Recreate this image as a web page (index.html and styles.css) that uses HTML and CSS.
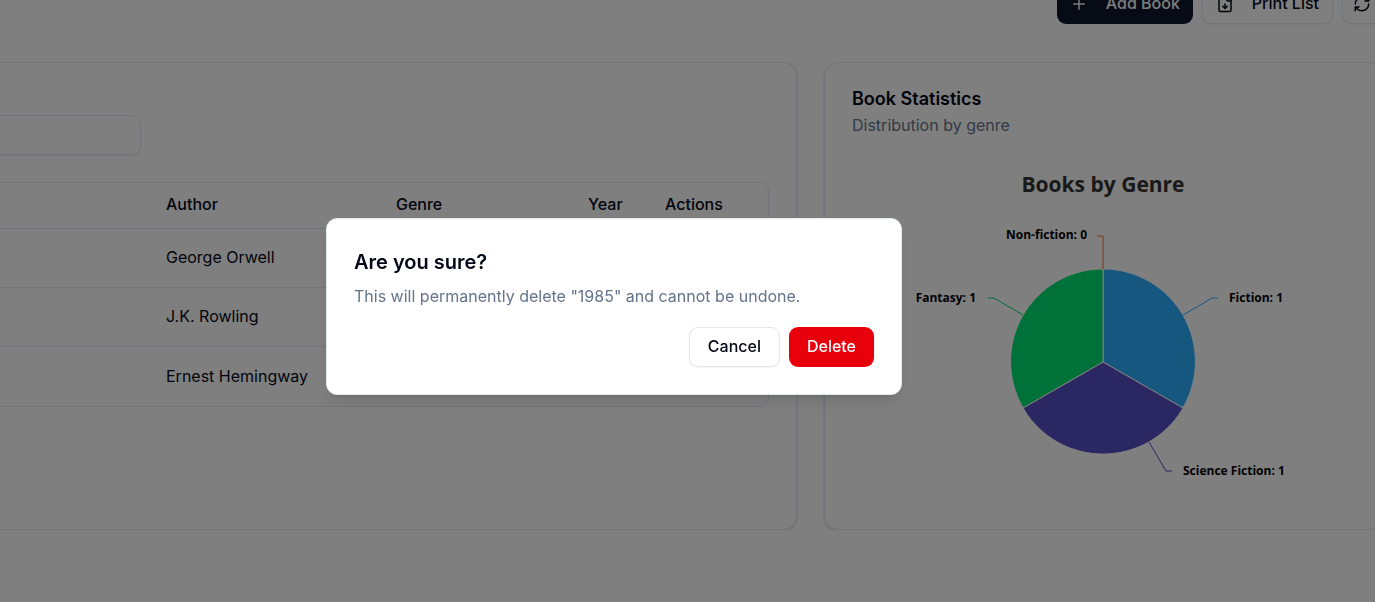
FILE: index.html
```html
<!DOCTYPE html>
<html lang="en">
<head>
<meta charset="utf-8">
<title>Books</title>
<link rel="stylesheet" href="styles.css">
</head>
<body>
<div class="page">
  <header class="toolbar">
    <button class="btn btn-primary" type="button">
      <svg class="icon" viewBox="0 0 24 24"><path d="M5 12h14M12 5v14"/></svg>
      Add Book
    </button>
    <button class="btn btn-outline" type="button">
      <svg class="icon" viewBox="0 0 24 24"><path d="M15 2H6a2 2 0 0 0-2 2v16a2 2 0 0 0 2 2h12a2 2 0 0 0 2-2V7z"/><path d="M14 2v4a2 2 0 0 0 2 2h4M12 18v-6M9 15l3 3 3-3"/></svg>
      Print List
    </button>
    <button class="btn btn-outline btn-refresh" type="button" aria-label="Refresh">
      <svg class="icon" viewBox="0 0 24 24"><path d="M3 12a9 9 0 0 1 9-9 9.750 9.750 0 0 1 6.740 2.740L21 8M21 3v5h-5M21 12a9 9 0 0 1-9 9 9.750 9.750 0 0 1-6.740-2.740L3 16M8 16H3v5"/></svg>
    </button>
  </header>
  <main class="content">
    <section class="card books">
      <input class="search" type="text" aria-label="Search books">
      <div class="table-frame">
        <table class="table">
          <colgroup><col class="col-title"><col class="col-author"><col class="col-genre"><col class="col-year"><col></colgroup>
          <thead><tr><th></th><th>Author</th><th>Genre</th><th>Year</th><th>Actions</th></tr></thead>
          <tbody>
            <tr><td></td><td>George Orwell</td><td></td><td></td><td></td></tr>
            <tr><td></td><td>J.K. Rowling</td><td></td><td></td><td></td></tr>
            <tr><td></td><td>Ernest Hemingway</td><td></td><td></td><td></td></tr>
          </tbody>
        </table>
      </div>
    </section>
    <section class="card stats">
      <h2 class="card-title">Book Statistics</h2>
      <p class="card-text">Distribution by genre</p>
      <svg class="chart" viewBox="0 0 502 343" role="img" aria-label="Books by Genre">
        <text class="chart-title" x="251" y="33">Books by Genre</text>
        <g class="slices">
          <path class="fiction" d="M251 203V112a2 2 0 0 1 2-2A92.500 92.500 0 0 1 332 247a2 2 0 0 1-2.700 1z"/>
          <path class="scifi" d="M251 203L329.300 248a2 2 0 0 1 .700 2.700A92.500 92.500 0 0 1 172 250.700a2 2 0 0 1 .700-2.700z"/>
          <path class="fantasy" d="M251 203L172.700 248a2 2 0 0 1-2.700-1A92.500 92.500 0 0 1 249 110a2 2 0 0 1 2 2z"/>
        </g>
        <g class="leaders">
          <path class="nonfiction-line" d="M251 110V77H245"/>
          <path class="fiction-line" d="M331 156L360 139H366"/>
          <path class="fantasy-line" d="M171 156L142 139H136"/>
          <path class="scifi-line" d="M297 283L314 312H320"/>
        </g>
        <g class="labels">
          <text class="end" x="235" y="80">Non-fiction: 0</text>
          <text x="377" y="143">Fiction: 1</text>
          <text class="end" x="124" y="143">Fantasy: 1</text>
          <text x="331" y="316">Science Fiction: 1</text>
        </g>
      </svg>
    </section>
  </main>
</div>
<div class="overlay">
  <div class="dialog" role="alertdialog" aria-labelledby="dialog-title" aria-describedby="dialog-text">
    <h2 class="dialog-title" id="dialog-title">Are you sure?</h2>
    <p class="dialog-text" id="dialog-text">This will permanently delete "1985" and cannot be undone.</p>
    <div class="dialog-actions">
      <button class="btn btn-outline" type="button">Cancel</button>
      <button class="btn btn-danger" type="button">Delete</button>
    </div>
  </div>
</div>
</body>
</html>
```
FILE: styles.css
```css
* { box-sizing: border-box; }
body {
  margin: 0;
  overflow: hidden;
  background: #fff;
  color: #020817;
  font: 16px/23px Inter, "Liberation Sans", sans-serif;
}
h2, p { margin: 0; }
.page { margin: -17px -7px 0 0; }
.toolbar {
  display: flex;
  justify-content: flex-end;
  gap: 9px;
}
.btn {
  display: inline-flex;
  align-items: center;
  height: 40px;
  padding: 0 18px;
  border: 0;
  border-radius: 9px;
  font: inherit;
  font-weight: 500;
  color: inherit;
}
.btn-primary { background: #0f172a; color: #f8fafc; }
.btn-outline {
  background: #fff;
  border: 1px solid #e2e8f0;
  box-shadow: 0 1px 2px rgb(0 0 0 / 5%);
}
.btn-danger { background: #e7000b; color: #f8fafc; }
.toolbar .btn { height: 41px; padding: 0 13px; gap: 18px; }
.toolbar .btn-refresh { padding: 0 10px; }
.icon {
  width: 18px;
  height: 18px;
  fill: none;
  stroke: currentColor;
  stroke-width: 2;
  stroke-linecap: round;
  stroke-linejoin: round;
}
.content {
  display: grid;
  grid-template-columns: 797fr 558fr;
  gap: 27px;
  margin-top: 38px;
}
.card {
  border: 1px solid #e2e8f0;
  border-radius: 14px;
  box-shadow: 0 1px 3px rgb(0 0 0 / 10%), 0 1px 2px rgb(0 0 0 / 10%);
  padding: 27px;
}
.books {
  border-left: 0;
  border-radius: 0 14px 14px 0;
  padding: 52px 27px 27px 0;
}
.search {
  display: block;
  width: 141px;
  height: 40px;
  border: 1px solid #e2e8f0;
  border-left: 0;
  border-radius: 0 9px 9px 0;
  background: #fff;
  box-shadow: 0 1px 2px rgb(0 0 0 / 5%);
  font: inherit;
}
.table-frame {
  margin-top: 27px;
  border: 1px solid #e2e8f0;
  border-left: 0;
  border-radius: 0 9px 9px 0;
}
.table {
  width: 100%;
  table-layout: fixed;
  border-collapse: collapse;
}
.col-title { width: 157px; }
.col-author { width: 230px; }
.col-genre { width: 192px; }
.col-year { width: 77px; }
.table th, .table td {
  padding: 0 9px;
  text-align: left;
}
.table th { height: 45px; padding-bottom: 2px; font-weight: 500; }
.table td { height: 59px; border-top: 1px solid #e2e8f0; }
.table tr:last-child td { height: 60px; }
.card-title { font-size: 18px; line-height: 18px; font-weight: 600; }
.card-text { margin-top: 6px; color: #64748b; }
.chart {
  display: block;
  width: 100%;
  margin-top: 22px;
}
.chart text { font-family: "Open Sans", "Noto Sans", sans-serif; font-weight: 700; }
.chart .chart-title { font-size: 21px; fill: #333; text-anchor: middle; }
.labels { font-size: 12px; fill: #000; }
.labels .end { text-anchor: end; }
.slices { stroke: #fff; stroke-width: 1; }
.fiction { fill: #2caffe; }
.scifi { fill: #544fc5; }
.fantasy { fill: #00e272; }
.leaders { fill: none; }
.fiction-line { stroke: #2caffe; }
.scifi-line { stroke: #544fc5; }
.fantasy-line { stroke: #00e272; }
.nonfiction-line { stroke: #fe6a35; }
.overlay {
  position: fixed;
  inset: 0;
  display: grid;
  place-items: center;
  padding: 10px 147px 0 0;
  background: rgb(0 0 0 / 50%);
}
.dialog {
  width: 576px;
  padding: 27px;
  background: #fff;
  border: 1px solid #e2e8f0;
  border-radius: 11px;
  box-shadow: 0 10px 15px -3px rgb(0 0 0 / 10%), 0 4px 6px -4px rgb(0 0 0 / 10%);
}
.dialog-title { font-size: 20px; line-height: 32px; font-weight: 600; }
.dialog-text { margin-top: 7px; color: #64748b; }
.dialog-actions {
  display: flex;
  justify-content: flex-end;
  gap: 9px;
  margin-top: 19px;
}
```
